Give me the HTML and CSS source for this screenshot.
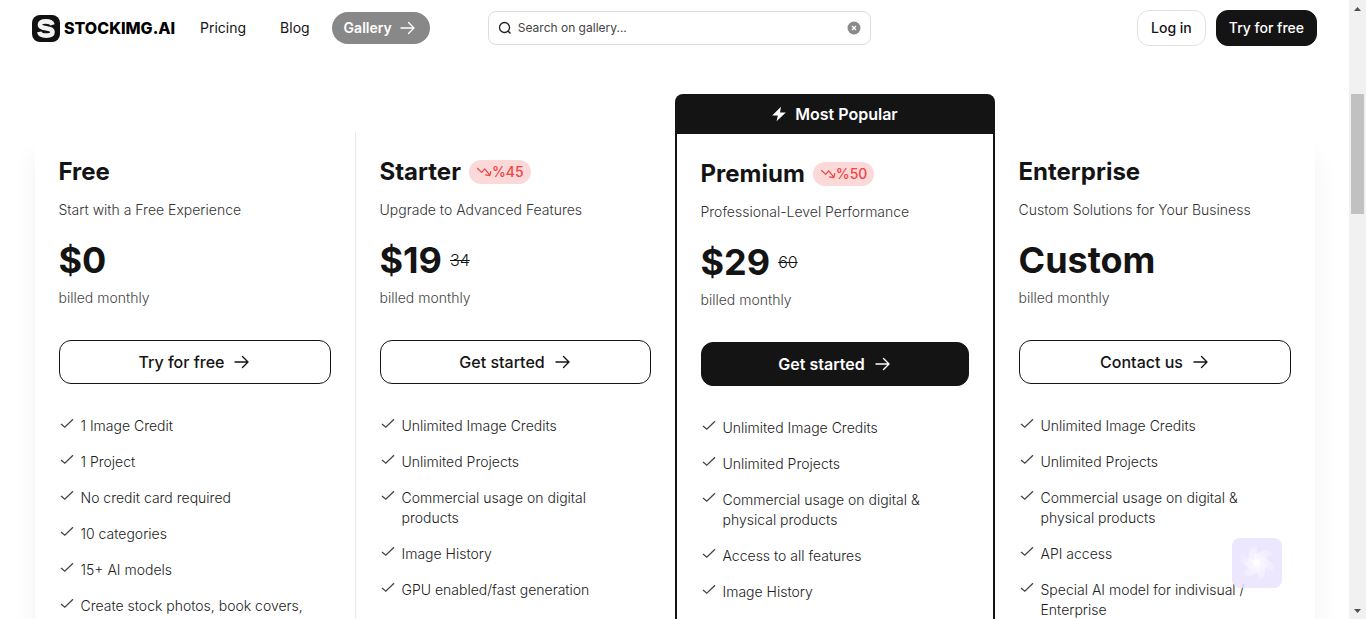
FILE: index.html
```html
<!DOCTYPE html>
<html lang="en">
<head>
    <meta charset="UTF-8">
    <meta name="viewport" content="width=device-width, initial-scale=1.0">
    <title>Stockimg.ai - Pricing</title>
    <link rel="stylesheet" href="styles.css">
</head>
<body>
    <!-- shared icons -->
    <svg class="sprite" aria-hidden="true">
        <symbol id="arrow" viewBox="0 0 16 16">
            <path d="M1 8h13M8.500 2.500L14 8l-5.500 5.500" fill="none" stroke="currentColor" stroke-width="1.400" stroke-linecap="round" stroke-linejoin="round"/>
        </symbol>
        <symbol id="check" viewBox="0 0 16 16">
            <path d="M2 8l3.800 3.200L14 3.300" fill="none" stroke="currentColor" stroke-width="1.300"/>
        </symbol>
        <symbol id="trend" viewBox="0 0 16 16">
            <path d="M1.500 4.500l4.200 3.900 3-3.500 5.100 6.300M14.800 7.500l-1 4.200-4.200-.9" fill="none" stroke="currentColor" stroke-width="1.200" stroke-linecap="round" stroke-linejoin="round"/>
        </symbol>
    </svg>

    <div class="page">
        <header class="header">
            <a href="#" class="logo">
                <svg class="logo-mark" viewBox="0 0 28 28" aria-hidden="true">
                    <rect y="1" width="28" height="27" rx="8" fill="#111"/>
                    <path d="M20.500 10.800C19.800 8.200 17.300 7.400 14 7.400c-3.500 0-6 1-6 3.300 0 4.800 12.500 2.300 12.500 7.300 0 2.600-3 3.600-6.300 3.600-3.600 0-6.400-.9-6.900-3.800" fill="none" stroke="#f2f2f2" stroke-width="4.600"/>
                </svg>
                <span>STOCKIMG.AI</span>
            </a>
            <nav class="nav">
                <a href="#">Pricing</a>
                <a href="#">Blog</a>
                <a href="#" class="nav-pill">Gallery <svg class="icon"><use href="#arrow"/></svg></a>
            </nav>
            <form class="search">
                <svg class="search-icon" viewBox="0 0 14 14" aria-hidden="true">
                    <circle cx="6.500" cy="6.500" r="5" fill="none" stroke="#222" stroke-width="1.300"/>
                    <path d="M10 10l2.500 2.500" stroke="#222" stroke-width="1.500"/>
                </svg>
                <input type="text" placeholder="Search on gallery..." aria-label="Search on gallery">
                <button type="reset" class="clear" aria-label="Clear">
                    <svg viewBox="0 0 14 14"><circle cx="7" cy="7" r="6.500" fill="#8a8a8a"/><path d="M5 5l4 4M9 5l-4 4" stroke="#fff" stroke-width="1.300"/></svg>
                </button>
            </form>
            <div class="account">
                <a href="#" class="login">Log in</a>
                <a href="#" class="signup">Try for free</a>
            </div>
        </header>

        <main class="plans">
            <section class="plan">
                <h2>Free</h2>
                <p class="desc">Start with a Free Experience</p>
                <p class="price">$0</p>
                <p class="billed">billed monthly</p>
                <button type="button" class="btn">Try for free <svg class="icon"><use href="#arrow"/></svg></button>
                <ul>
                    <li><svg class="icon"><use href="#check"/></svg>1 Image Credit</li>
                    <li><svg class="icon"><use href="#check"/></svg>1 Project</li>
                    <li><svg class="icon"><use href="#check"/></svg>No credit card required</li>
                    <li><svg class="icon"><use href="#check"/></svg>10 categories</li>
                    <li><svg class="icon"><use href="#check"/></svg>15+ AI models</li>
                    <li><svg class="icon"><use href="#check"/></svg>Create stock photos, book covers,</li>
                </ul>
            </section>

            <section class="plan plan-divided">
                <h2>Starter <span class="sale"><svg class="icon"><use href="#trend"/></svg>%45</span></h2>
                <p class="desc">Upgrade to Advanced Features</p>
                <p class="price">$19 <s>34</s></p>
                <p class="billed">billed monthly</p>
                <button type="button" class="btn">Get started <svg class="icon"><use href="#arrow"/></svg></button>
                <ul>
                    <li><svg class="icon"><use href="#check"/></svg>Unlimited Image Credits</li>
                    <li><svg class="icon"><use href="#check"/></svg>Unlimited Projects</li>
                    <li><svg class="icon"><use href="#check"/></svg>Commercial usage on digital products</li>
                    <li><svg class="icon"><use href="#check"/></svg>Image History</li>
                    <li><svg class="icon"><use href="#check"/></svg>GPU enabled/fast generation</li>
                </ul>
            </section>

            <div class="popular">
                <div class="ribbon">
                    <svg class="icon" viewBox="0 0 16 16" aria-hidden="true"><path d="M10 .8L1.200 9.500h5.600L5.600 15.200l9.200-8.800H9z" fill="#fff"/></svg>
                    Most Popular
                </div>
                <section class="plan">
                    <h2>Premium <span class="sale"><svg class="icon"><use href="#trend"/></svg>%50</span></h2>
                    <p class="desc">Professional-Level Performance</p>
                    <p class="price">$29 <s>60</s></p>
                    <p class="billed">billed monthly</p>
                    <button type="button" class="btn btn-dark">Get started <svg class="icon"><use href="#arrow"/></svg></button>
                    <ul>
                        <li><svg class="icon"><use href="#check"/></svg>Unlimited Image Credits</li>
                        <li><svg class="icon"><use href="#check"/></svg>Unlimited Projects</li>
                        <li><svg class="icon"><use href="#check"/></svg>Commercial usage on digital &amp; physical products</li>
                        <li><svg class="icon"><use href="#check"/></svg>Access to all features</li>
                        <li><svg class="icon"><use href="#check"/></svg>Image History</li>
                    </ul>
                </section>
            </div>

            <section class="plan">
                <h2>Enterprise</h2>
                <p class="desc">Custom Solutions for Your Business</p>
                <p class="price">Custom</p>
                <p class="billed">billed monthly</p>
                <button type="button" class="btn">Contact us <svg class="icon"><use href="#arrow"/></svg></button>
                <ul>
                    <li><svg class="icon"><use href="#check"/></svg>Unlimited Image Credits</li>
                    <li><svg class="icon"><use href="#check"/></svg>Unlimited Projects</li>
                    <li><svg class="icon"><use href="#check"/></svg>Commercial usage on digital &amp; physical products</li>
                    <li><svg class="icon"><use href="#check"/></svg>API access</li>
                    <li><svg class="icon"><use href="#check"/></svg>Special AI model for indivisual / Enterprise</li>
                </ul>
            </section>
        </main>
    </div>

    <div class="scrollbar" aria-hidden="true">
        <svg viewBox="0 0 17 17"><path d="M5 11h7L8.500 7z" fill="#505050"/></svg>
        <div class="track"><div class="thumb"></div></div>
        <svg viewBox="0 0 17 17"><path d="M5 7h7l-3.500 4z" fill="#505050"/></svg>
    </div>

    <button type="button" class="chat" aria-label="Open assistant">
        <svg viewBox="0 0 50 50" aria-hidden="true">
            <defs>
                <linearGradient id="fade" x1="0" y1="0" x2="0" y2="1">
                    <stop offset="0" stop-color="#fff" stop-opacity=".1"/>
                    <stop offset="1" stop-color="#fff" stop-opacity=".8"/>
                </linearGradient>
            </defs>
            <path id="blade" d="M25 6l-7 4-2 12 9 6 4-2-6-6 2-7z" fill="url(#fade)"/>
            <use href="#blade" transform="rotate(60 25 25)"/>
            <use href="#blade" transform="rotate(120 25 25)"/>
            <use href="#blade" transform="rotate(180 25 25)"/>
            <use href="#blade" transform="rotate(240 25 25)"/>
            <use href="#blade" transform="rotate(300 25 25)"/>
        </svg>
    </button>
</body>
</html>
```
FILE: styles.css
```css
* {
    box-sizing: border-box;
}

body {
    margin: 0;
    height: 100vh;
    display: flex;
    overflow: hidden;
    font-family: Inter, "Liberation Sans", sans-serif;
    font-size: 14px;
    line-height: 20px;
    color: #141414;
    background: #fff;
}

a {
    color: inherit;
    text-decoration: none;
}

button,
input {
    font: inherit;
    color: inherit;
}

.sprite {
    position: absolute;
    width: 0;
    height: 0;
}

.icon {
    width: 16px;
    height: 16px;
    flex: none;
}

.page {
    flex: 1;
    min-width: 0;
    overflow: hidden;
}

/* Header */
.header {
    display: flex;
    align-items: center;
    height: 56px;
    padding: 0 32px;
}

.logo {
    display: flex;
    align-items: center;
    gap: 4px;
    width: 144px;
    margin-right: 24px;
    color: #000;
    font-size: 16px;
    font-weight: 800;
}

.logo-mark {
    width: 28px;
    height: 28px;
    flex: none;
}

.nav {
    display: flex;
    align-items: center;
    gap: 34px;
    margin-right: 58px;
}

.nav-pill {
    display: flex;
    align-items: center;
    gap: 8px;
    height: 32px;
    margin-left: -12px;
    padding: 0 14px 0 12px;
    border-radius: 16px;
    background: #888;
    color: #fff;
    font-weight: 600;
}

.search {
    display: flex;
    align-items: center;
    gap: 6px;
    width: 383px;
    height: 34px;
    padding: 0 9px;
    border: 1px solid #ddd;
    border-radius: 8px;
}

.search-icon {
    width: 14px;
    height: 14px;
}

.search input {
    flex: 1;
    min-width: 0;
    padding: 0;
    border: 0;
    outline: 0;
    background: none;
    font-size: 12px;
}

.search input::placeholder {
    color: #444;
}

.clear {
    display: flex;
    width: 14px;
    height: 14px;
    padding: 0;
    border: 0;
    background: none;
}

.account {
    display: flex;
    gap: 10px;
    margin-left: auto;
    font-weight: 500;
}

.login,
.signup {
    height: 36px;
    padding: 7px 13px;
    border: 1px solid #e2e2e2;
    border-radius: 12px;
}

.signup {
    padding: 7px 12px;
    border-color: #141414;
    background: #141414;
    color: #fff;
}

/* Plans */
.plans {
    display: grid;
    grid-template-columns: repeat(4, 1fr);
    max-width: 1280px;
    margin: 76px auto 0;
    box-shadow: 0 24px 24px rgba(0, 0, 0, 0.06);
}

.plan {
    min-height: 600px;
    padding: 24px;
    background: #fff;
}

.plan-divided {
    border-left: 1px solid #eaeaea;
}

.popular {
    margin-top: -38px;
}

.popular .plan {
    border: 2px solid #141414;
}

.ribbon {
    display: flex;
    align-items: center;
    justify-content: center;
    gap: 8px;
    height: 38px;
    padding-top: 2px;
    border-radius: 8px 8px 0 0;
    background: #141414;
    color: #fff;
    font-size: 16px;
    font-weight: 600;
}

.plan h2 {
    display: flex;
    align-items: center;
    gap: 8px;
    margin: 0 0 12px;
    font-size: 24px;
    line-height: 32px;
    font-weight: 700;
}

.sale {
    display: flex;
    align-items: center;
    height: 24px;
    padding: 0 7px;
    border-radius: 12px;
    background: #fcd9d9;
    color: #f04444;
    font-size: 14px;
    font-weight: 500;
}

.desc,
.billed {
    margin: 0;
    color: #333;
    font-weight: 300;
}

.desc {
    margin-bottom: 20px;
}

.billed {
    color: #444;
}

.price {
    display: flex;
    align-items: center;
    gap: 8px;
    margin: 0 0 8px;
    font-size: 36px;
    line-height: 40px;
    font-weight: 700;
}

.price s {
    font-size: 16px;
    font-weight: 300;
}

.btn {
    display: flex;
    align-items: center;
    justify-content: center;
    gap: 10px;
    width: 100%;
    height: 44px;
    margin: 32px 0;
    border: 1px solid #141414;
    border-radius: 12px;
    background: #fff;
    font-size: 16px;
    font-weight: 500;
}

.btn-dark {
    background: #141414;
    color: #fff;
    font-weight: 600;
}

.plan ul {
    display: grid;
    gap: 16px;
    margin: 0;
    padding: 0 16px 0 0;
    list-style: none;
    color: #222;
    font-weight: 300;
}

.plan li {
    display: flex;
    gap: 6px;
}

.plan li .icon {
    color: #444;
}

/* Scrollbar */
.scrollbar {
    display: flex;
    flex-direction: column;
    width: 17px;
    background: #f1f1f1;
}

.track {
    flex: 1;
    padding: 77px 2px 0;
}

.thumb {
    height: 120px;
    background: #c1c1c1;
}

/* Floating assistant */
.chat {
    position: fixed;
    right: 84px;
    bottom: 31px;
    width: 50px;
    height: 50px;
    padding: 0;
    border: 0;
    border-radius: 8px;
    background: rgba(232, 224, 255, 0.8);
}
```
